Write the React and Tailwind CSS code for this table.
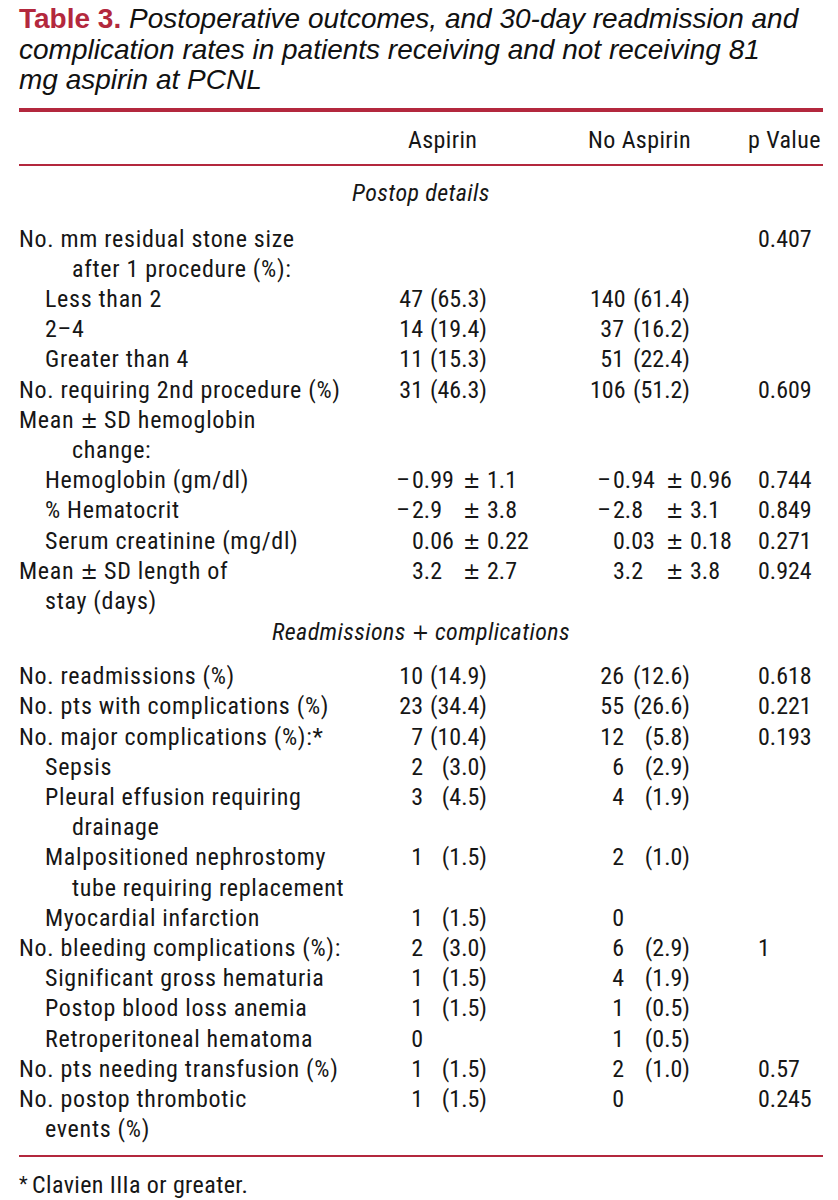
const RED = 'bg-[#b3283d]'

const count = (n, p) => ({ kind: 'count', n, p })
const mean = (s, v, sd) => ({ kind: 'mean', s, v, sd })

const top = [
  { label: 'No. mm residual stone size', pv: '0.407' },
  { label: 'after 1 procedure (%):', indent: 2 },
  { label: 'Less than 2', indent: 1, a: count('47', '(65.3)'), b: count('140', '(61.4)') },
  { label: '2–4', indent: 1, a: count('14', '(19.4)'), b: count('37', '(16.2)') },
  { label: 'Greater than 4', indent: 1, a: count('11', '(15.3)'), b: count('51', '(22.4)') },
  { label: 'No. requiring 2nd procedure (%)', a: count('31', '(46.3)'), b: count('106', '(51.2)'), pv: '0.609' },
  { label: 'Mean', pm: 'SD hemoglobin' },
  { label: 'change:', indent: 2 },
  { label: 'Hemoglobin (gm/dl)', indent: 1, a: mean('–', '0.99', '1.1'), b: mean('–', '0.94', '0.96'), pv: '0.744' },
  { label: '% Hematocrit', indent: 1, a: mean('–', '2.9', '3.8'), b: mean('–', '2.8', '3.1'), pv: '0.849' },
  { label: 'Serum creatinine (mg/dl)', indent: 1, a: mean('', '0.06', '0.22'), b: mean('', '0.03', '0.18'), pv: '0.271' },
  { label: 'Mean', pm: 'SD length of', a: mean('', '3.2', '2.7'), b: mean('', '3.2', '3.8'), pv: '0.924' },
  { label: 'stay (days)', indent: 1 },
]

const bottom = [
  { label: 'No. readmissions (%)', a: count('10', '(14.9)'), b: count('26', '(12.6)'), pv: '0.618' },
  { label: 'No. pts with complications (%)', a: count('23', '(34.4)'), b: count('55', '(26.6)'), pv: '0.221' },
  { label: 'No. major complications (%):*', a: count('7', '(10.4)'), b: count('12', '(5.8)'), pv: '0.193' },
  { label: 'Sepsis', indent: 1, a: count('2', '(3.0)'), b: count('6', '(2.9)') },
  { label: 'Pleural effusion requiring', indent: 1, a: count('3', '(4.5)'), b: count('4', '(1.9)') },
  { label: 'drainage', indent: 2 },
  { label: 'Malpositioned nephrostomy', indent: 1, a: count('1', '(1.5)'), b: count('2', '(1.0)') },
  { label: 'tube requiring replacement', indent: 2 },
  { label: 'Myocardial infarction', indent: 1, a: count('1', '(1.5)'), b: count('0', '') },
  { label: 'No. bleeding complications (%):', a: count('2', '(3.0)'), b: count('6', '(2.9)'), pv: '1' },
  { label: 'Significant gross hematuria', indent: 1, a: count('1', '(1.5)'), b: count('4', '(1.9)') },
  { label: 'Postop blood loss anemia', indent: 1, a: count('1', '(1.5)'), b: count('1', '(0.5)') },
  { label: 'Retroperitoneal hematoma', indent: 1, a: count('0', ''), b: count('1', '(0.5)') },
  { label: 'No. pts needing transfusion (%)', a: count('1', '(1.5)'), b: count('2', '(1.0)'), pv: '0.57' },
  { label: 'No. postop thrombotic', a: count('1', '(1.5)'), b: count('0', ''), pv: '0.245' },
  { label: 'events (%)', indent: 1 },
]

function Sym({ children }) {
  return <span className="inline-block font-['DejaVu_Sans',sans-serif] text-[23px] leading-none not-italic tracking-normal">{children}</span>
}

function MeanCell({ cell, signW, valW }) {
  return (
    <div className="flex whitespace-pre tracking-normal">
      <span className={`${signW} pr-[2px] text-right`}>{cell.s}</span>
      <span className={valW}>{cell.v}</span>
      <span className="w-[24px]">
        <Sym>±</Sym>
      </span>
      <span>{cell.sd}</span>
    </div>
  )
}

function AspirinCell({ cell }) {
  if (!cell) return <div />
  if (cell.kind === 'count') {
    return (
      <div className="flex whitespace-pre tracking-normal">
        <span className="w-[30px] text-right">{cell.n}</span>
        <span className="w-[64px] text-right">{cell.p}</span>
      </div>
    )
  }
  return <MeanCell cell={cell} signW="w-[19px]" valW="w-[51px]" />
}

function NoAspirinCell({ cell }) {
  if (!cell) return <div />
  if (cell.kind === 'count') {
    return (
      <div className="flex whitespace-pre tracking-normal">
        <span className="w-[34px] text-right">{cell.n}</span>
        <span className="w-[66px] text-right">{cell.p}</span>
      </div>
    )
  }
  return (
    <div className="pl-[5px]">
      <MeanCell cell={cell} signW="w-[18px]" valW="w-[53px]" />
    </div>
  )
}

function Row({ row }) {
  const indent = row.indent === 2 ? 'pl-[53px]' : row.indent === 1 ? 'pl-[26px]' : ''
  return (
    <div className="grid grid-cols-[374px_197px_158px_1fr] leading-[30.2px]">
      <div className={`whitespace-nowrap ${indent}`}>
        {row.label}
        {row.pm && (
          <>
            {' '}
            <Sym>±</Sym> {row.pm}
          </>
        )}
      </div>
      <AspirinCell cell={row.a} />
      <NoAspirinCell cell={row.b} />
      <div className="pl-[10px] tracking-normal">{row.pv}</div>
    </div>
  )
}

export default function App() {
  return (
    <div className="min-h-[1200px] bg-white pl-[19px] pr-[15px] pt-[4px] text-[#161616]">
      <h1 className="font-['Liberation_Sans',Arial,sans-serif] text-[28px] leading-[30.5px] italic text-[#111]">
        <span className="font-bold not-italic text-[#b3283d]">Table 3.</span> Postoperative outcomes, and 30-day readmission and
        <br />
        complication rates in patients receiving and not receiving 81
        <br />
        mg aspirin at PCNL
      </h1>

      <div className={`mt-[12px] h-[4px] ${RED}`} />

      <div className="font-['Roboto',sans-serif] text-[24px] tracking-[0.7px] [font-stretch:75%]">
        <div className="mt-[13px] grid grid-cols-[374px_197px_158px_1fr] whitespace-nowrap leading-[30px] tracking-[0.4px]">
          <div />
          <div className="pl-[15px]">Aspirin</div>
          <div className="-ml-[2px]">No Aspirin</div>
          <div>p Value</div>
        </div>
        <div className={`mt-[9px] h-[2px] ${RED}`} />

        <div className="mt-[12px] text-center leading-[30px] tracking-[0.4px] italic">Postop details</div>
        <div className="mt-[16px]">
          {top.map((r, i) => (
            <Row key={i} row={r} />
          ))}
        </div>

        <div className="mt-[1px] text-center leading-[30px] tracking-[0.4px] italic">
          Readmissions <Sym>+</Sym> complications
        </div>
        <div className="mt-[14px]">
          {bottom.map((r, i) => (
            <Row key={i} row={r} />
          ))}
        </div>

        <div className={`mt-[11px] h-[2px] ${RED}`} />
        <p className="mt-[13px] leading-[30px] tracking-[0.4px]">
          <span className="relative -top-[2px] mr-[4px] text-[20px]">*</span>Clavien IIIa or greater.
        </p>
      </div>
    </div>
  )
}
